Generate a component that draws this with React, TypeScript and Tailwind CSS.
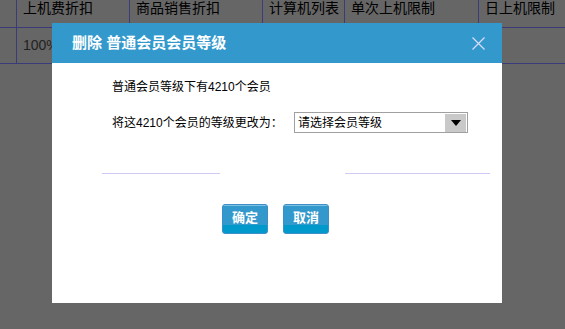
import React from 'react';

const cols = [
  { w: 'w-[16px]', head: '', cell: '' },
  { w: 'w-[113px]', head: '上机费折扣', cell: '100%' },
  { w: 'w-[133px]', head: '商品销售折扣', cell: '' },
  { w: 'w-[82px]', head: '计算机列表', cell: '' },
  { w: 'w-[134px]', head: '单次上机限制', cell: '' },
  { w: 'flex-1', head: '日上机限制', cell: '' },
];

const font = { fontFamily: '"Liberation Sans", "Noto Sans CJK SC", sans-serif' };

export default function App() {
  return (
    <div className="relative w-[565px] h-[329px] overflow-hidden bg-[#666666] text-black" style={font}>
      {/* dimmed page table behind the dialog */}
      <div className="flex flex-col">
        <div className="flex h-[28px] border-b border-[#3b3b7a]">
          {cols.map((c, i) => (
            <div key={i} className={`${c.w} shrink-0 ${i > 0 ? 'border-l border-[#3b3b7a]' : ''} pl-[6px] text-[14px] leading-[16px]`}>
              {c.head}
            </div>
          ))}
        </div>
        <div className="flex h-[36px] border-b border-[#3b3b7a]">
          {cols.map((c, i) => (
            <div key={i} className={`${c.w} shrink-0 ${i > 0 ? 'border-l border-[#3b3b7a]' : ''} pl-[6px] flex items-center text-[14px] text-[#222]`}>
              {c.cell}
            </div>
          ))}
        </div>
      </div>

      {/* dialog */}
      <div className="absolute left-[52px] top-[23px] w-[450px] h-[280px] bg-white flex flex-col">
        <div className="h-[40px] bg-[#3399cc] flex items-center justify-between pl-[20px] pr-[17px]">
          <span className="text-white font-bold text-[15px]">删除 普通会员会员等级</span>
          <svg width="13" height="13" viewBox="0 0 13 13" className="mt-[1px]">
            <path d="M0.5 0.5 L12.5 12.5 M12.5 0.5 L0.5 12.5" stroke="#dcdcff" strokeWidth="1.2" />
          </svg>
        </div>

        <div className="flex flex-col pl-[60px] pt-[16px] text-[12px] leading-[16px]">
          <div>普通会员等级下有4210个会员</div>
          <div className="flex items-center mt-[17px]">
            <span className="w-[182px]">将这4210个会员的等级更改为：</span>
            <div className="w-[174px] h-[21px] border border-[#a0a0a0] flex items-center justify-between pl-[3px] pr-[1px]">
              <span className="text-[12px]">请选择会员等级</span>
              <div className="w-[21px] h-[18px] bg-[#c9c9c9] flex items-center justify-center">
                <svg width="10" height="6" viewBox="0 0 10 6">
                  <path d="M0 0 L10 0 L5 6 Z" fill="#000" />
                </svg>
              </div>
            </div>
          </div>
        </div>

        <div className="flex items-center mt-[40px] pl-[50px] pr-[12px]">
          <div className="w-[118px] h-px bg-[#cfcaf5]" />
          <div className="flex-1" />
          <div className="w-[145px] h-px bg-[#cfcaf5]" />
        </div>

        <div className="flex justify-center gap-[15px] mt-[30px] pr-[3px]">
          {['确定', '取消'].map((t) => (
            <button
              key={t}
              className="relative w-[46px] h-[30px] rounded-[3px] border border-[#3d8fc6] bg-[#3399cc] overflow-hidden text-white font-bold text-[13px]"
            >
              <span className="absolute left-0 right-0 top-0 h-px bg-[#7cc0e6]" />
              <span className="absolute left-0 right-0 bottom-0 h-[8px] bg-[#0099cc]" />
              <span className="relative leading-[26px] block -mt-[2px]">{t}</span>
            </button>
          ))}
        </div>
      </div>
    </div>
  );
}
